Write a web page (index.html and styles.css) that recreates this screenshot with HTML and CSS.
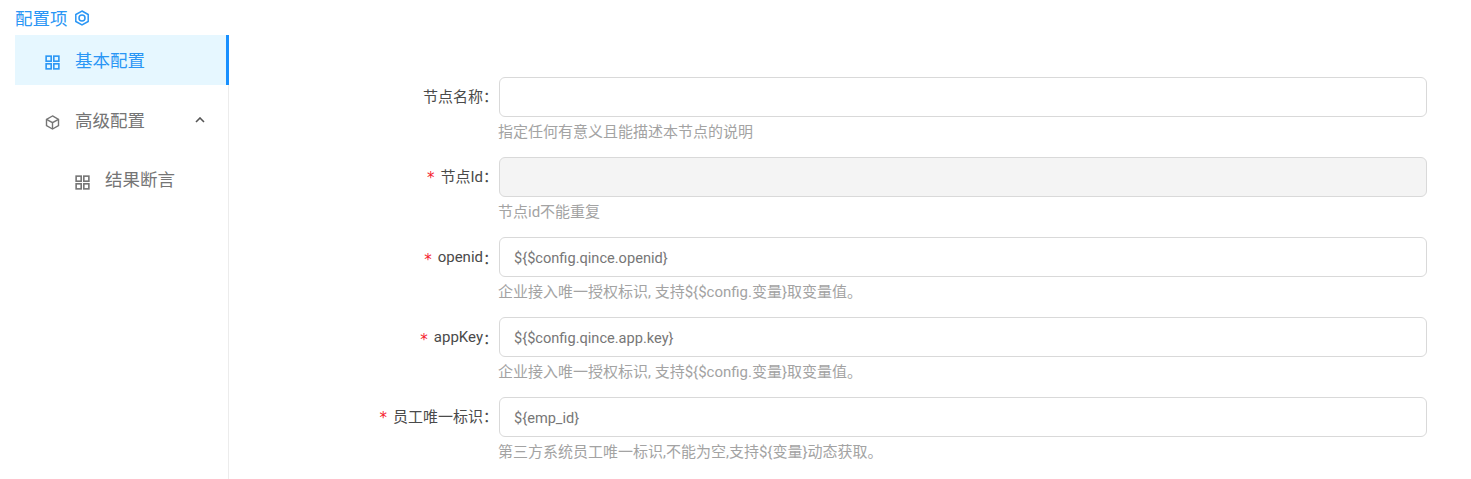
FILE: index.html
```html
<!DOCTYPE html>
<html lang="zh-CN">
<head>
    <meta charset="UTF-8">
    <meta name="viewport" content="width=device-width, initial-scale=1.0">
    <title>配置项</title>
    <link rel="stylesheet" href="styles.css">
</head>
<body>
    <div class="page">
        <!-- Left menu -->
        <aside class="sidebar">
            <div class="sidebar-title">
                <span>配置项</span>
                <svg class="title-icon" viewBox="0 0 16 16" fill="none" stroke="currentColor" stroke-width="1.5">
                    <path d="M8 1 14.2 4.5V11.5L8 15 1.8 11.5V4.5Z"/>
                    <circle cx="8" cy="8" r="3"/>
                </svg>
            </div>
            <nav class="menu">
                <div class="menu-item active">
                    <svg class="menu-icon" viewBox="0 0 16 16" fill="none" stroke="currentColor" stroke-width="1.7">
                        <rect x="1.2" y="1.2" width="5.4" height="5.4"/>
                        <rect x="9.4" y="1.2" width="5.4" height="5.4"/>
                        <rect x="1.2" y="9.4" width="5.4" height="5.4"/>
                        <rect x="9.4" y="9.4" width="5.4" height="5.4"/>
                    </svg>
                    <span class="menu-text">基本配置</span>
                </div>
                <div class="menu-item group">
                    <svg class="menu-icon" viewBox="0 0 16 16" fill="none" stroke="currentColor" stroke-width="1.5">
                        <path d="M8 1 14.4 4.6V11.4L8 15 1.6 11.4V4.6Z"/>
                        <path d="M1.6 4.6 8 8.2 14.4 4.6M8 8.2V15"/>
                    </svg>
                    <span class="menu-text">高级配置</span>
                    <svg class="arrow" viewBox="0 0 10 6" fill="none" stroke="currentColor" stroke-width="1.6">
                        <path d="M1 5 5 1 9 5"/>
                    </svg>
                </div>
                <div class="menu-item sub">
                    <svg class="menu-icon" viewBox="0 0 16 16" fill="none" stroke="currentColor" stroke-width="1.7">
                        <rect x="1.2" y="1.2" width="5.4" height="5.4"/>
                        <rect x="9.4" y="1.2" width="5.4" height="5.4"/>
                        <rect x="1.2" y="9.4" width="5.4" height="5.4"/>
                        <rect x="9.4" y="9.4" width="5.4" height="5.4"/>
                    </svg>
                    <span class="menu-text">结果断言</span>
                </div>
            </nav>
        </aside>

        <!-- Node config form -->
        <main class="form">
            <div class="form-row">
                <label class="form-label">节点名称</label>
                <div class="form-field">
                    <input class="form-input" type="text">
                    <p class="form-help">指定任何有意义且能描述本节点的说明</p>
                </div>
            </div>
            <div class="form-row">
                <label class="form-label required">节点Id</label>
                <div class="form-field">
                    <input class="form-input" type="text" disabled>
                    <p class="form-help">节点id不能重复</p>
                </div>
            </div>
            <div class="form-row">
                <label class="form-label required latin">openid</label>
                <div class="form-field">
                    <input class="form-input" type="text" value="${$config.qince.openid}">
                    <p class="form-help">企业接入唯一授权标识, 支持${$config.变量}取变量值。</p>
                </div>
            </div>
            <div class="form-row">
                <label class="form-label required latin">appKey</label>
                <div class="form-field">
                    <input class="form-input" type="text" value="${$config.qince.app.key}">
                    <p class="form-help">企业接入唯一授权标识, 支持${$config.变量}取变量值。</p>
                </div>
            </div>
            <div class="form-row">
                <label class="form-label required">员工唯一标识</label>
                <div class="form-field">
                    <input class="form-input" type="text" value="${emp_id}">
                    <p class="form-help">第三方系统员工唯一标识,不能为空,支持${变量}动态获取。</p>
                </div>
            </div>
        </main>
    </div>
</body>
</html>
```

FILE: styles.css
```css
* {
    box-sizing: border-box;
}

body {
    font-family: Roboto, "Noto Sans CJK SC", sans-serif;
    background-color: #fff;
    margin: 0;
    height: 479px;
    overflow: hidden;
}

.page {
    display: flex;
    height: 100%;
    padding-left: 15px;
}

.sidebar {
    width: 214px;
    flex-shrink: 0;
}

.sidebar-title {
    display: flex;
    align-items: center;
    gap: 6px;
    height: 35px;
    font-size: 17.5px;
    color: #2a96f5;
}

.title-icon {
    width: 16px;
    height: 16px;
}

.menu {
    height: 444px;
    border-right: 1px solid #ececec;
}

.menu-item {
    display: flex;
    align-items: center;
    height: 50px;
    margin-bottom: 10px;
    padding-left: 30px;
    font-size: 17.5px;
    color: #757575;
}

.menu-item.active {
    background-color: #e6f7ff;
    color: #2a96f5;
    border-right: 3px solid #1890ff;
    margin-right: -1px;
}

.menu-item.sub {
    padding-left: 60px;
}

.menu-item.sub .menu-text {
    margin-bottom: 4px;
}

.menu-icon {
    width: 15px;
    height: 15px;
    margin-right: 15px;
    margin-top: 4px;
}

.menu-text {
    margin-bottom: 2px;
}

.arrow {
    width: 10px;
    height: 6px;
    margin-left: 50px;
    color: #555;
}

.form {
    flex: 1;
    padding: 77px 44px 0 0;
}

.form-row {
    display: flex;
    height: 80px;
}

.form-label {
    width: 270px;
    height: 40px;
    padding-right: 9px;
    padding-bottom: 4px;
    display: flex;
    align-items: center;
    justify-content: flex-end;
    font-size: 15px;
    color: #4a4a4a;
}

.form-label.latin {
    padding-bottom: 0;
}

.form-label::after {
    content: "：";
    width: 9px;
    margin-right: -2px;
    overflow: hidden;
}

.form-label.required::before {
    content: "*";
    font-family: "DejaVu Sans", sans-serif;
    font-size: 15px;
    color: #f5222d;
    margin-top: 6px;
    margin-right: 6px;
}

.form-field {
    flex: 1;
}

.form-input {
    display: block;
    width: 100%;
    height: 40px;
    padding: 2px 14px 0;
    border: 1px solid #d9d9d9;
    border-radius: 6px;
    font-family: inherit;
    font-size: 14.6px;
    color: #777;
    background-color: #fff;
}

.form-input:disabled {
    background-color: #f4f4f4;
}

.form-help {
    margin: 4px 0 0 -1px;
    font-size: 15px;
    line-height: 22px;
    color: #a3a3a3;
}
```
